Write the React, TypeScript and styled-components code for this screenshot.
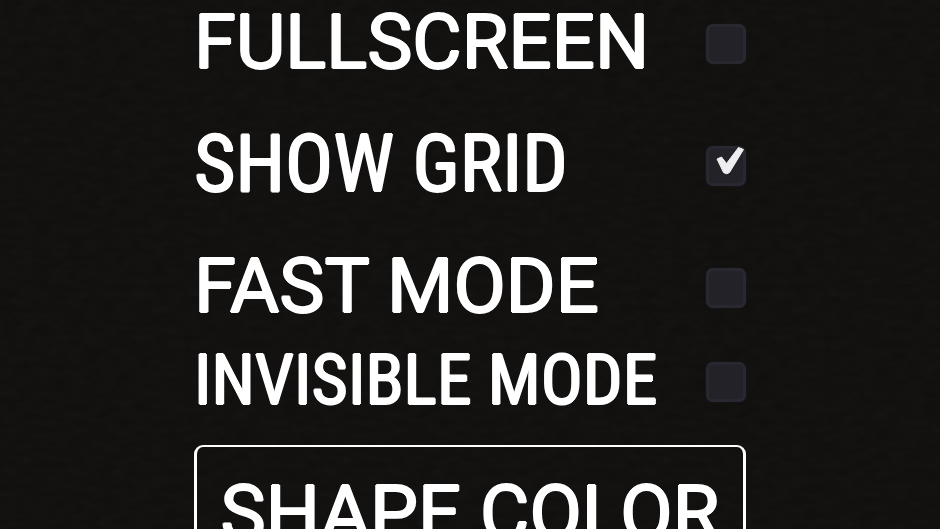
import React, { useId, useState } from "react";
import styled, { createGlobalStyle } from "styled-components";

const GRAIN = `url("data:image/svg+xml,${encodeURIComponent(
  `<svg xmlns="http://www.w3.org/2000/svg" width="320" height="320"><filter id="g"><feTurbulence type="fractalNoise" baseFrequency="0.06 0.14" numOctaves="3" stitchTiles="stitch"/><feColorMatrix type="saturate" values="0.2"/></filter><rect width="320" height="320" filter="url(#g)" opacity="0.03"/></svg>`
)}")`;

const GlobalStyle = createGlobalStyle`
  *, *::before, *::after { box-sizing: border-box; }
  html, body { margin: 0; background: #0f0e0d; }
`;

type Face = "regular" | "condensed";

const faces: Record<Face, string> = {
  regular: 'Roboto, "Liberation Sans", sans-serif',
  condensed: '"Roboto Condensed", Roboto, "Liberation Sans", sans-serif',
};

const rounded = `
  text-shadow:
    1px 0 0 #fff, -1px 0 0 #fff, 0 1px 0 #fff, 0 -1px 0 #fff;
`;

const Page = styled.main`
  height: 100vh;
  overflow: hidden;
  background: #0f0e0d ${GRAIN};
  color: #fff;
`;

const Panel = styled.div`
  display: flex;
  flex-direction: column;
  width: 90%;
  max-width: 552px;
  margin: 0 auto;
`;

const Group = styled.div`
  display: flex;
  flex-direction: column;
  gap: 34px;
`;

const Row = styled.div<{ $compact?: boolean }>`
  display: flex;
  align-items: center;
  justify-content: space-between;
  height: ${(p) => (p.$compact ? 60 : 88)}px;
  margin-top: ${(p) => (p.$compact ? 20 : 0)}px;
`;

const Label = styled.label<{ $size: number; $face: Face }>`
  padding-bottom: 4px;
  font-family: ${(p) => faces[p.$face]};
  font-size: ${(p) => p.$size}px;
  font-weight: 400;
  line-height: 1;
  white-space: nowrap;
  ${rounded}
`;

const CheckWrap = styled.span`
  position: relative;
  display: block;
  flex: none;
  width: 40px;
  height: 40px;
`;

const CheckBox = styled.input`
  appearance: none;
  display: block;
  width: 100%;
  height: 100%;
  margin: 0;
  border: 3px solid #292830;
  border-radius: 7px;
  background: #232228;
  box-shadow: 0 0 2px #1e1d24;
  cursor: pointer;
`;

const Mark = styled.svg`
  position: absolute;
  inset: 0;
  width: 100%;
  height: 100%;
  overflow: visible;
  pointer-events: none;
`;

const ColorButton = styled.button`
  display: block;
  width: 100%;
  margin-top: 33px;
  padding: 22px 16px;
  border: solid #fff;
  border-width: 2px 3px;
  border-radius: 9px;
  background: transparent;
  color: inherit;
  font-family: ${faces.regular};
  font-size: 76px;
  font-weight: 400;
  line-height: 88px;
  white-space: nowrap;
  cursor: pointer;
  ${rounded}
`;

interface SettingProps {
  text: string;
  size: number;
  face: Face;
  initial?: boolean;
  compact?: boolean;
}

function Setting({ text, size, face, initial = false, compact }: SettingProps) {
  const id = useId();
  const [on, setOn] = useState(initial);
  return (
    <Row $compact={compact}>
      <Label htmlFor={id} $size={size} $face={face}>
        {text}
      </Label>
      <CheckWrap>
        <CheckBox id={id} type="checkbox" checked={on} onChange={(e) => setOn(e.target.checked)} />
        {on && (
          <Mark viewBox="0 0 40 40" aria-hidden="true">
            <path
              d="M11 13 L15.500 11 L20.500 17.500 L32.500 1.500 L37.500 3.500 L23.500 26.500 Q20.500 29 17.500 26.500 Z"
              fill="#eeeef0"
              stroke="#eeeef0"
              strokeWidth="1"
              strokeLinejoin="round"
            />
          </Mark>
        )}
      </CheckWrap>
    </Row>
  );
}

export default function App() {
  return (
    <>
      <GlobalStyle />
      <Page>
        <Panel>
          <Group>
            <Setting text="FULLSCREEN" size={76} face="regular" />
            <Setting text="SHOW GRID" size={80} face="condensed" initial />
            <Setting text="FAST MODE" size={76} face="regular" />
          </Group>
          <Setting text="INVISIBLE MODE" size={70} face="condensed" compact />
          <ColorButton type="button">SHAPE COLOR</ColorButton>
        </Panel>
      </Page>
    </>
  );
}
